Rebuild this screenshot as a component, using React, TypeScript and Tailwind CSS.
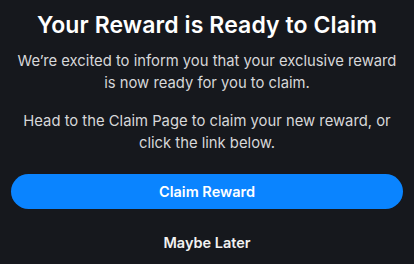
export default function App() {
  return (
    <div className="w-[414px] h-[264px] bg-[#16181d] flex flex-col items-center px-[11px] pt-[10px] font-['Inter',sans-serif] overflow-hidden">
      <h1 className="text-[23px] leading-[31px] font-semibold text-white tracking-[0.1px]">
        Your Reward is Ready to Claim
      </h1>
      <p className="mt-[9px] text-[14.8px] leading-[22px] text-[#d6d7d9] text-center">
        We’re excited to inform you that your exclusive reward
        <br />
        is now ready for you to claim.
      </p>
      <p className="mt-[16px] text-[14.8px] leading-[22px] text-[#d6d7d9] text-center">
        Head to the Claim Page to claim your new reward, or
        <br />
        click the link below.
      </p>
      <button className="mt-[20px] w-full h-[35px] rounded-full bg-[#0a84ff] text-white text-[14.5px] font-semibold">
        Claim Reward
      </button>
      <button className="mt-[23px] text-[14.5px] font-semibold text-[#f2f2f2]">Maybe Later</button>
    </div>
  );
}
